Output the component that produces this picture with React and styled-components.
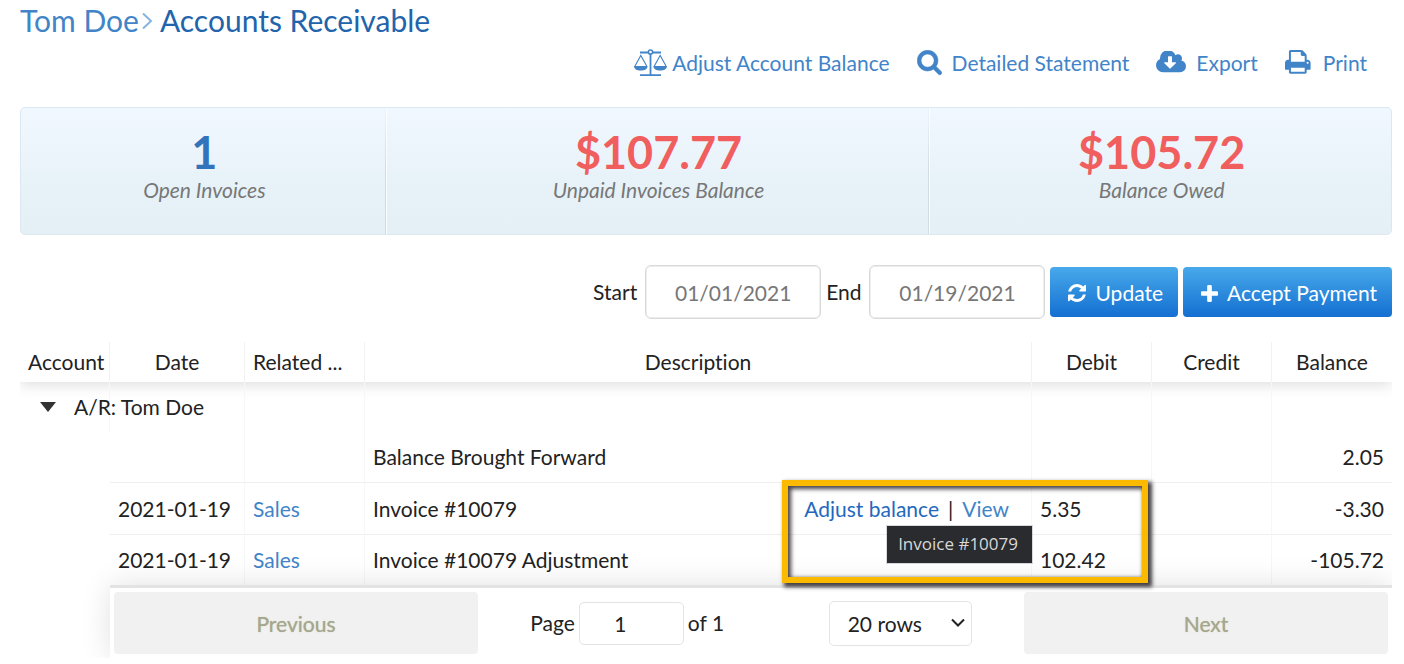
import { useState } from "react";
import styled, { createGlobalStyle } from "styled-components";

const GlobalStyle = createGlobalStyle`
  * {
    box-sizing: border-box;
  }

  body {
    margin: 0;
    background: #fff;
    color: #222;
    font-family: Lato, "Open Sans", sans-serif;
    font-size: 21px;
    line-height: 26px;
    font-variant-ligatures: none;
  }

  button,
  input,
  select {
    font: inherit;
    color: inherit;
  }

  a {
    color: #4284c8;
    text-decoration: none;
  }
`;

const Page = styled.main`
  padding: 0 12px 0 20px;
`;

const Title = styled.h1`
  margin: 0;
  display: flex;
  align-items: center;
  font-size: 30px;
  font-weight: 400;
  line-height: 40px;
  color: #2264ab;

  svg {
    margin: 2px 7px 0 2px;
  }
`;

const Toolbar = styled.nav`
  display: flex;
  justify-content: flex-end;
  gap: 27px;
  padding-right: 25px;
  height: 46px;
`;

const ToolLink = styled.a`
  display: flex;
  align-items: center;
  gap: ${(props) => (props.$tight ? "5px" : "10px")};
  font-size: 21px;
`;

const Glyph = styled.svg`
  flex: none;
  display: block;
  width: ${(props) => props.$width}px;
  height: ${(props) => props.$height || props.$width}px;
  fill: currentColor;
`;

const Stats = styled.section`
  display: grid;
  grid-template-columns: 364fr 544fr 463fr;
  height: 128px;
  margin-top: 21px;
  border: 1px solid #dbe8f1;
  border-radius: 5px;
  background: linear-gradient(#f0f7ff, #eaf3fa 50%, #e7f3f9 51%, #e5f0f6);
`;

const Stat = styled.div`
  padding: 19px 0 0 3px;
  text-align: center;

  & + & {
    border-left: 1px solid;
    border-image: linear-gradient(#edf5fb, #d0dde3 50%, #d0dde3) 1;
    box-shadow: inset 1px 0 #fafdff;
  }
`;

const StatValue = styled.div`
  font-size: 45px;
  font-weight: 700;
  line-height: 50px;
  color: ${(props) => (props.$alert ? "#f05e5e" : "#3273bb")};
`;

const StatLabel = styled.div`
  font-style: italic;
  color: #777;
`;

const Filters = styled.form`
  display: flex;
  align-items: center;
  justify-content: flex-end;
  gap: 5px;
  margin: 30px 0 23px;
`;

const Field = styled.label`
  display: flex;
  align-items: center;
  gap: 8px;
`;

const DateInput = styled.input`
  width: 176px;
  height: 54px;
  padding: 0;
  border: 1px solid #d9d9d9;
  box-shadow: inset 0 0 0 1px #ededed;
  border-radius: 6px;
  background: #fff;
  color: #777;
  text-align: center;
`;

const PrimaryButton = styled.button`
  display: flex;
  align-items: center;
  gap: 9px;
  height: 50px;
  padding: 2px 15px 0 18px;
  border: 0;
  border-radius: 4px;
  background: linear-gradient(#48a9ea, #146fd1);
  color: #fff;
`;

const Ledger = styled.section`
  position: relative;
`;

// clips the header and pager shadows at the sides
const LedgerClip = styled.div`
  overflow: hidden;
`;

const Table = styled.table`
  width: 100%;
  table-layout: fixed;
  border-collapse: separate;
  border-spacing: 0;
`;

const Col = styled.col`
  width: ${(props) => (props.$width ? `${props.$width}px` : "auto")};
`;

const Head = styled.thead`
  box-shadow: 0 2px 15px 0 rgba(0, 0, 0, 0.15);
`;

const HeadCell = styled.th`
  height: 40px;
  padding: 0 8px;
  border-right: 1px solid #f2f2f2;
  font-weight: 400;
  text-align: ${(props) => props.$align || "center"};
  white-space: nowrap;

  &:last-child {
    border-right: 0;
  }
`;

const Row = styled.tr`
  height: ${(props) => props.$height}px;
`;

const Cell = styled.td`
  padding: 0 8px;
  border-right: 1px solid #f7f7f7;
  border-bottom: ${(props) => (props.$line ? "1px solid #efefef" : "0")};
  text-align: ${(props) => props.$align || "left"};
  white-space: nowrap;

  &:last-child {
    border-right: 0;
  }
`;

const Gutter = styled.td`
  padding: 0;
`;

const Group = styled.div`
  display: flex;
  align-items: center;
  gap: 18px;
  padding-left: 12px;
`;

const Expander = styled.button`
  width: 16px;
  height: 16px;
  padding: 0;
  border: 0;
  background: none;
  color: #333;
`;

const Description = styled.div`
  display: flex;
  justify-content: space-between;
`;

const Actions = styled.span`
  position: relative;
  margin-right: 14px;
`;

const StrongLink = styled.a`
  color: #2468bd;
`;

const Divider = styled.span`
  margin: 0 9px;
`;

const Tooltip = styled.span`
  position: absolute;
  z-index: 1;
  top: 30px;
  right: -23px;
  padding: 6px 14px 7px 11px;
  background: #2a2b2f;
  color: #d8d8d8;
  font-family: "Open Sans", "Noto Sans", sans-serif;
  font-size: 17px;
  line-height: 24px;
  box-shadow: 0 0 0 1px rgba(0, 0, 0, 0.15);
`;

const Callout = styled.div`
  position: absolute;
  top: 138px;
  right: 244px;
  width: 366px;
  height: 103px;
  border: 6px solid #fbba00;
  box-shadow:
    3px 3px 4px 1px rgba(35, 30, 35, 0.85),
    inset 2px 2px 4px 1px rgba(35, 30, 35, 0.85);
  pointer-events: none;
`;

const Pager = styled.div`
  position: relative;
  display: flex;
  margin-left: 90px;
  padding: 4px;
  border-top: 3px solid #e3e3e3;
  background: #fff;
  box-shadow: 0 0 30px 0 rgba(0, 0, 0, 0.12);
`;

const PagerButton = styled.button`
  flex: 1;
  height: 62px;
  padding: 2px 0 0;
  border: 0;
  border-radius: 4px;
  background: #f1f1f1;
  color: #a5a791;
  text-shadow: 0 0 1px #b4b68c;
`;

const PagerCenter = styled.div`
  flex: 1.5;
  display: flex;
  align-items: center;
  justify-content: space-around;
`;

const PageInfo = styled.label`
  display: flex;
  align-items: center;
  gap: 4px;
`;

const PageInput = styled.input`
  width: 105px;
  height: 43px;
  padding: 0 22px 0 0;
  border: 1px solid #e3e3e3;
  border-radius: 5px;
  background: #fff;
  text-align: center;
`;

const RowsPicker = styled.div`
  position: relative;

  select {
    width: 143px;
    height: 45px;
    padding: 2px 18px 0;
    border: 1px solid #e3e3e3;
    border-radius: 5px;
    background: #fff;
    appearance: none;
  }

  svg {
    position: absolute;
    top: 17px;
    right: 7px;
    pointer-events: none;
  }
`;

function ScaleIcon() {
  return (
    <Glyph $width={33} $height={28} viewBox="0 0 33 28" aria-hidden="true">
      <g fill="none" stroke="currentColor">
        <path d="M6 3.5h8M19 3.5h8M6 26.2h21" strokeWidth="1.8" />
        <path d="M16.5 5v21" strokeWidth="1.8" />
        <circle cx="16.5" cy="3" r="2.1" strokeWidth="1.5" />
        <path d="M1 17 6.8 6.5 12.7 17M20.3 17 26.2 6.5 32 17" strokeWidth="1.1" />
      </g>
      <path d="M0 17h13.6c0 3-3 4.6-6.8 4.6S0 20 0 17zM19.4 17H33c0 3-3 4.6-6.8 4.6s-6.8-1.6-6.8-4.6z" />
    </Glyph>
  );
}

function SearchIcon() {
  return (
    <Glyph $width={25} $height={27} viewBox="44 108 1704 1840" aria-hidden="true">
      <path
        stroke="currentColor"
        strokeWidth="40"
        d="M1216 832q0-185-131.5-316.5t-316.5-131.5-316.5 131.5-131.5 316.5 131.5 316.5 316.5 131.5 316.5-131.5 131.5-316.5zm512 832q0 52-38 90t-90 38q-54 0-90-38l-343-342q-179 124-399 124-143 0-273.5-55.5t-225-150-150-225-55.5-273.5 55.5-273.5 150-225 225-150 273.5-55.5 273.5 55.5 225 150 150 225 55.5 273.5q0 220-124 399l343 343q37 37 37 90z"
      />
    </Glyph>
  );
}

function CloudIcon() {
  return (
    <Glyph $width={30} $height={24} viewBox="-64 176 1920 1536" aria-hidden="true">
      <path d="M1216 928q0-14-9-23t-23-9h-224v-352q0-13-9.5-22.5t-22.5-9.5h-192q-13 0-22.5 9.5t-9.5 22.5v352h-224q-13 0-22.5 9.5t-9.5 22.5q0 14 9 23l352 352q9 9 23 9t23-9l351-351q10-12 10-24zm640 224q0 159-112.5 271.5t-271.5 112.5h-1088q-185 0-316.5-131.5t-131.5-316.5q0-130 70-240t188-165q-2-30-2-43 0-212 150-362t362-150q156 0 285.5 87t188.5 231q71-62 166-62 106 0 181 75t75 181q0 76-41 138 130 31 213.5 135.5t83.5 238.5z" />
    </Glyph>
  );
}

function PrintIcon() {
  return (
    <Glyph $width={28} $height={26} viewBox="64 128 1820 1690" aria-hidden="true">
      <path d="M448 1536h896v-256h-896v256zm0-640h896v-384h-160q-40 0-68-28t-28-68v-160h-640v640zm1152 64q0-26-19-45t-45-19-45 19-19 45 19 45 45 19 45-19 19-45zm128 0v416q0 13-9.5 22.5t-22.5 9.5h-224v160q0 40-28 68t-68 28h-960q-40 0-68-28t-28-68v-160h-224q-13 0-22.5-9.5t-9.5-22.5v-416q0-79 56.5-135.5t135.5-56.5h64v-544q0-40 28-68t68-28h672q40 0 88 20t76 48l152 152q28 28 48 76t20 88v256h64q79 0 135.5 56.5t56.5 135.5z" />
    </Glyph>
  );
}

function RefreshIcon() {
  return (
    <Glyph $width={18} viewBox="128 128 1536 1536" aria-hidden="true">
      <path d="M1639 1056q0 5-1 7-64 268-268 434.5t-478 166.5q-146 0-282.5-55t-243.5-157l-129 129q-19 19-45 19t-45-19-19-45v-448q0-26 19-45t45-19h448q26 0 45 19t19 45-19 45l-137 137q71 66 161 102t187 36q134 0 250-65t186-179q11-17 53-117 8-23 30-23h192q13 0 22.5 9.5t9.5 22.5zm25-800v448q0 26-19 45t-45 19h-448q-26 0-45-19t-19-45 19-45l138-138q-148-137-349-137-134 0-250 65t-186 179q-11 17-53 117-8 23-30 23h-199q-13 0-22.5-9.5t-9.5-22.5v-7q65-268 270-434.5t480-166.5q146 0 284 55.5t245 156.5l130-129q19-19 45-19t45 19 19 45z" />
    </Glyph>
  );
}

function PlusIcon() {
  return (
    <Glyph $width={17} viewBox="192 128 1408 1408" aria-hidden="true">
      <path d="M1600 736v192q0 40-28 68t-68 28h-416v416q0 40-28 68t-68 28h-192q-40 0-68-28t-28-68v-416h-416q-40 0-68-28t-28-68v-192q0-40 28-68t68-28h416v-416q0-40 28-68t68-28h192q40 0 68 28t28 68v416h416q40 0 68 28t28 68z" />
    </Glyph>
  );
}

const columns = [
  { name: "Account", width: 90 },
  { name: "Date", width: 135 },
  { name: "Related ...", width: 120, align: "left" },
  { name: "Description" },
  { name: "Debit", width: 120 },
  { name: "Credit", width: 120 },
  { name: "Balance", width: 120 },
];

const entries = [
  { description: "Balance Brought Forward", balance: "2.05", height: 51 },
  {
    date: "2021-01-19",
    related: "Sales",
    description: "Invoice #10079",
    tooltip: "Invoice #10079",
    debit: "5.35",
    balance: "-3.30",
    height: 52,
  },
  {
    date: "2021-01-19",
    related: "Sales",
    description: "Invoice #10079 Adjustment",
    debit: "102.42",
    balance: "-105.72",
    height: 50,
  },
];

function Entry({ entry, line }) {
  return (
    <Row $height={entry.height}>
      <Gutter />
      <Cell $line={line}>{entry.date}</Cell>
      <Cell $line={line}>
        {entry.related && <a href="#sales">{entry.related}</a>}
      </Cell>
      <Cell $line={line}>
        <Description>
          <span>{entry.description}</span>
          {entry.tooltip && (
            <Actions>
              <StrongLink href="#adjust">Adjust balance</StrongLink>
              <Divider>|</Divider>
              <a href="#view" aria-describedby="view-tip">
                View
              </a>
              <Tooltip role="tooltip" id="view-tip">
                {entry.tooltip}
              </Tooltip>
            </Actions>
          )}
        </Description>
      </Cell>
      <Cell $line={line}>{entry.debit}</Cell>
      <Cell $line={line} />
      <Cell $line={line} $align="right">
        {entry.balance}
      </Cell>
    </Row>
  );
}

export default function App() {
  const [open, setOpen] = useState(true);

  return (
    <Page>
      <GlobalStyle />
      <Title>
        <a href="#tom-doe">Tom Doe</a>
        <Glyph $width={12} $height={18} viewBox="0 0 12 18" aria-hidden="true">
          <path d="M2 1.5 10 9l-8 7.5" fill="none" stroke="#86b4e2" strokeWidth="2" />
        </Glyph>
        Accounts Receivable
      </Title>
      <Toolbar>
        <ToolLink href="#adjust-account" $tight>
          <ScaleIcon />
          Adjust Account Balance
        </ToolLink>
        <ToolLink href="#statement">
          <SearchIcon />
          Detailed Statement
        </ToolLink>
        <ToolLink href="#export">
          <CloudIcon />
          Export
        </ToolLink>
        <ToolLink href="#print">
          <PrintIcon />
          Print
        </ToolLink>
      </Toolbar>

      <Stats>
        <Stat>
          <StatValue>1</StatValue>
          <StatLabel>Open Invoices</StatLabel>
        </Stat>
        <Stat>
          <StatValue $alert>$107.77</StatValue>
          <StatLabel>Unpaid Invoices Balance</StatLabel>
        </Stat>
        <Stat>
          <StatValue $alert>$105.72</StatValue>
          <StatLabel>Balance Owed</StatLabel>
        </Stat>
      </Stats>

      <Filters onSubmit={(e) => e.preventDefault()}>
        <Field>
          Start
          <DateInput type="text" defaultValue="01/01/2021" />
        </Field>
        <Field>
          End
          <DateInput type="text" defaultValue="01/19/2021" />
        </Field>
        <PrimaryButton type="submit">
          <RefreshIcon />
          Update
        </PrimaryButton>
        <PrimaryButton type="button">
          <PlusIcon />
          Accept Payment
        </PrimaryButton>
      </Filters>

      <Ledger>
        <LedgerClip>
          <Table>
            <colgroup>
              {columns.map((column) => (
                <Col key={column.name} $width={column.width} />
              ))}
            </colgroup>
            <Head>
              <tr>
                {columns.map((column) => (
                  <HeadCell key={column.name} scope="col" $align={column.align}>
                    {column.name}
                  </HeadCell>
                ))}
              </tr>
            </Head>
            <tbody>
              <Row $height={50}>
                <Cell>
                  <Group>
                    <Expander
                      type="button"
                      aria-label="Toggle account"
                      aria-expanded={open}
                      onClick={() => setOpen(!open)}
                    >
                      <Glyph $width={16} viewBox="0 0 16 16">
                        <path d={open ? "M0 3h16L8 13z" : "M3 0v16l10-8z"} />
                      </Glyph>
                    </Expander>
                    A/R: Tom Doe
                  </Group>
                </Cell>
                <Cell />
                <Cell />
                <Cell />
                <Cell />
                <Cell />
                <Cell />
              </Row>
              {open &&
                entries.map((entry, i) => (
                  <Entry key={i} entry={entry} line={i < entries.length - 1} />
                ))}
            </tbody>
          </Table>
          <Pager>
            <PagerButton type="button" disabled>
              Previous
            </PagerButton>
            <PagerCenter>
              <PageInfo>
                Page
                <PageInput type="text" defaultValue="1" />
                of 1
              </PageInfo>
              <RowsPicker>
                <select aria-label="Rows per page" defaultValue="20">
                  <option value="10">10 rows</option>
                  <option value="20">20 rows</option>
                  <option value="50">50 rows</option>
                </select>
                <Glyph $width={14} $height={10} viewBox="0 0 14 10">
                  <path d="m1 1.5 6 6 6-6" fill="none" stroke="#222" strokeWidth="2" />
                </Glyph>
              </RowsPicker>
            </PagerCenter>
            <PagerButton type="button" disabled>
              Next
            </PagerButton>
          </Pager>
        </LedgerClip>
        {open && <Callout />}
      </Ledger>
    </Page>
  );
}
